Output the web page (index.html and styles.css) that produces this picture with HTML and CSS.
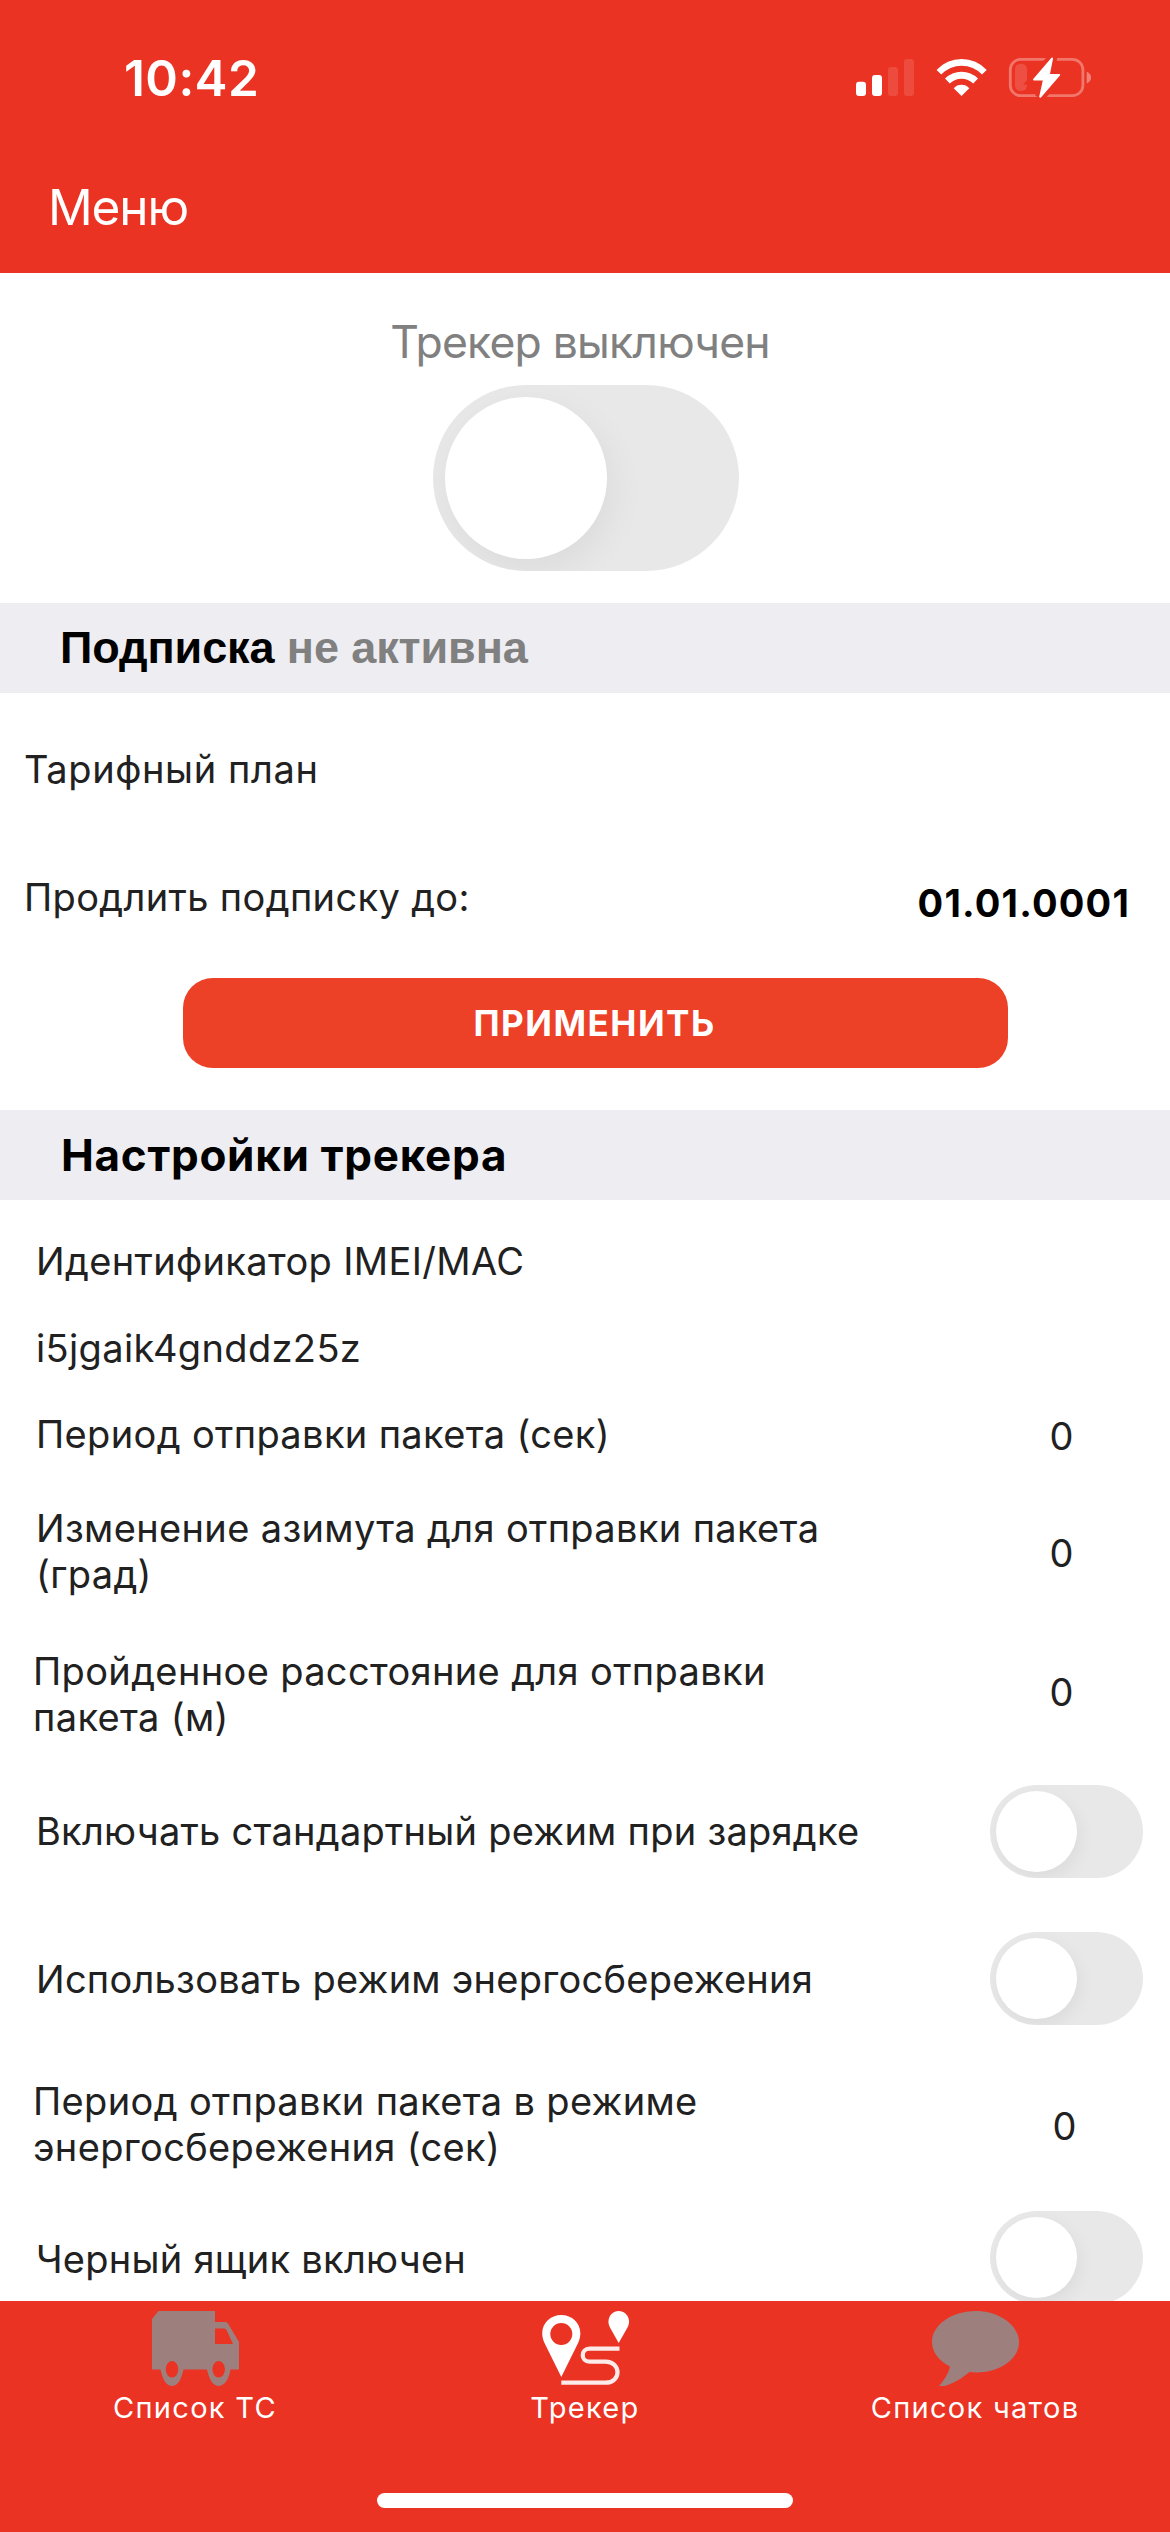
FILE: index.html
```html
<!DOCTYPE html>
<html lang="ru">
<head>
<meta charset="utf-8">
<title>Трекер</title>
<link rel="stylesheet" href="styles.css">
</head>
<body>
<div class="screen">
  <header class="header">
    <div class="status">
      <span class="clock">10:42</span>
      <svg class="status-icons" viewBox="0 0 244 44" fill="#fff">
        <rect x="4" y="25.7" width="10" height="14.3" rx="3"/>
        <rect x="20" y="19" width="10" height="21" rx="3"/>
        <rect x="36" y="11" width="10" height="29" rx="3" opacity=".12"/>
        <rect x="52" y="3" width="10" height="37" rx="3" opacity=".12"/>
        <path d="M84.6 14A34 34 0 0 1 134.7 14L130 18.4A28 28 0 0 0 89.3 18.4Z"/>
        <path d="M93 22.6A23.4 23.4 0 0 1 126 22.6L121.2 27.6A16.6 16.6 0 0 0 97.8 27.6Z"/>
        <path d="M101.7 32.2A10.6 10.6 0 0 1 117.3 32.2L109.5 40Z"/>
        <rect x="158.3" y="3.3" width="72.6" height="36.4" rx="10.5" fill="none" stroke="#fff" stroke-width="2.8" opacity=".33"/>
        <path d="M234.7 15.8C240.6 18 240.6 25.4 234.7 27.4Z" opacity=".38"/>
        <rect x="163" y="7.7" width="12" height="27.3" rx="5.5" opacity=".14"/>
        <path class="bolt-gap" d="M200 2.6L182 23.6H192L188.2 40.8L207.2 18.9H196.8Z"/>
        <path class="bolt" d="M200 2.6L182 23.6H192L188.2 40.8L207.2 18.9H196.8Z"/>
      </svg>
    </div>
    <h1 class="title">Меню</h1>
  </header>

  <main class="content">
    <section class="tracker">
      <p class="tracker-state">Трекер выключен</p>
      <div class="toggle toggle-large"><span class="knob"></span></div>
    </section>

    <h2 class="band band-subscription">Подписка <span class="muted">не активна</span></h2>
    <section class="subscription">
      <p class="label label-plan">Тарифный план</p>
      <div class="extend">
        <p class="label">Продлить подписку до:</p>
        <p class="date">01.01.0001</p>
      </div>
      <button class="apply">ПРИМЕНИТЬ</button>
    </section>

    <h2 class="band band-settings">Настройки трекера</h2>
    <section class="settings">
      <div class="row row-id"><p class="label">Идентификатор IMEI/MAC</p></div>
      <div class="row row-value"><p class="label">i5jgaik4gnddz25z</p></div>
      <div class="row row-period"><p class="label">Период отправки пакета (сек)</p><p class="value">0</p></div>
      <div class="row row-azimuth"><p class="label">Изменение азимута для отправки пакета (град)</p><p class="value">0</p></div>
      <div class="row row-distance"><p class="label">Пройденное расстояние для отправки пакета (м)</p><p class="value">0</p></div>
      <div class="row row-charging"><p class="label">Включать стандартный режим при зарядке</p><div class="toggle"><span class="knob"></span></div></div>
      <div class="row row-saving"><p class="label">Использовать режим энергосбережения</p><div class="toggle"><span class="knob"></span></div></div>
      <div class="row row-saving-period"><p class="label">Период отправки пакета в режиме энергосбережения (сек)</p><p class="value">0</p></div>
      <div class="row row-blackbox"><p class="label">Черный ящик включен</p><div class="toggle"><span class="knob"></span></div></div>
    </section>
  </main>

  <footer class="footer">
    <nav class="tabs">
      <a class="tab">
        <svg class="tab-icon" viewBox="0 0 87 75" fill="#9d7f7e">
          <path fill-rule="evenodd" d="M0 8L6.5 0H63V11H73.5Q75 11 76 12.5L87 31V58.5H78.5C77.5 65 74 75 66.7 75S56.5 65 55 58.5H31.5C30 65 27.3 75 20 75S10 65 8.5 58.5H0ZM63 17.5V33H81L74.5 19Q73.8 17.5 72 17.5ZM13.7 58.3a6.3 8.3 0 1 0 12.6 0a6.3 8.3 0 1 0-12.6 0ZM60.4 58.3a6.3 8.3 0 1 0 12.6 0a6.3 8.3 0 1 0-12.6 0Z"/>
        </svg>
        <span class="tab-label">Список ТС</span>
      </a>
      <a class="tab">
        <svg class="tab-icon" viewBox="0 0 87 75" fill="#fff">
          <path fill-rule="evenodd" d="M19.3 66L2.5 32C-4.5 17 5.5 4 19.3 4S43 17 36.1 32ZM8.3 23a11 11 0 1 0 22 0a11 11 0 1 0-22 0Z"/>
          <path d="M76.7 32L68 16.5C63.5 8 69.5 0 76.7 0S90 8 85.5 16.5Z"/>
          <path d="M77.5 37.7H47.5C38.5 37.7 38.5 50.7 47.5 50.7H63.5C79.5 50.7 79.5 71.7 63.5 71.7H19.3" fill="none" stroke="#fff" stroke-width="4.2" opacity=".9"/>
        </svg>
        <span class="tab-label">Трекер</span>
      </a>
      <a class="tab">
        <svg class="tab-icon" viewBox="0 0 87 75" fill="#9d7f7e">
          <path d="M43.5 0C67 0 87 14 87 31C87 50 64 64 37.500 61C30 67.500 21 72.500 12.500 75H7C12.500 69 16.500 62 18 55.500C7 50 0 41 0 31C0 14 20 0 43.500 0Z"/>
        </svg>
        <span class="tab-label">Список чатов</span>
      </a>
    </nav>
    <div class="home-indicator"></div>
  </footer>
</div>
</body>
</html>
```
FILE: styles.css
```css
* { box-sizing: border-box; margin: 0; padding: 0; }

body {
  background: #fff;
  font-family: Inter, "Liberation Sans", sans-serif;
}

.screen {
  width: 1170px;
  height: 2532px;
  display: flex;
  flex-direction: column;
  overflow: hidden;
}

/* Header */
.header {
  flex: none;
  height: 273px;
  padding-top: 48px;
  background: #eb3323;
  color: #fff;
  display: flex;
  flex-direction: column;
  gap: 69px;
}

.status {
  height: 60px;
  padding: 0 74px 0 124px;
  display: flex;
  justify-content: space-between;
  align-items: center;
}

.clock {
  font-size: 49.5px;
  font-weight: 600;
  line-height: 60px;
  letter-spacing: 0.4px;
}

.status-icons { width: 244px; height: 44px; }
.bolt-gap { fill: #eb3323; stroke: #eb3323; stroke-width: 10; }
.bolt { fill: #fff; stroke: #fff; stroke-width: 2; stroke-linejoin: round; }

.title {
  padding-left: 48px;
  font-size: 49.5px;
  font-weight: 400;
  line-height: 60px;
  letter-spacing: -1.1px;
}

.content { flex: 1; min-height: 0; overflow: hidden; }

/* Main switch */
.tracker {
  height: 330px;
  padding-top: 42px;
  display: flex;
  flex-direction: column;
  align-items: center;
  gap: 16px;
}

.tracker-state {
  padding-right: 10px;
  color: #808080;
  font-size: 44.5px;
  line-height: 54px;
  letter-spacing: -0.8px;
}

.toggle {
  flex: none;
  width: 153px;
  height: 93px;
  padding: 6px;
  border-radius: 47px;
  background: #e8e8e9;
  overflow: hidden;
}

.knob {
  display: block;
  width: 81px;
  height: 81px;
  border-radius: 50%;
  background: #fff;
  box-shadow: 3px 6px 18px rgba(0, 0, 0, 0.055);
}

.toggle-large {
  width: 306px;
  height: 186px;
  padding: 12px;
  border-radius: 93px;
  margin-left: 2px;
}

.toggle-large .knob {
  width: 162px;
  height: 162px;
  box-shadow: 6px 12px 36px rgba(0, 0, 0, 0.055);
}

/* Section bands */
.band {
  height: 90px;
  line-height: 90px;
  background: #eeedf2;
  color: #000;
  font-weight: 700;
}

.band-subscription {
  padding-left: 60px;
  font-family: "Liberation Sans", Arial, sans-serif;
  font-size: 45px;
  letter-spacing: -0.1px;
}

.muted { color: #808080; }

.band-settings {
  padding-left: 61px;
  font-size: 44px;
  letter-spacing: 0.72px;
}

.label {
  color: #212121;
  font-size: 38px;
  line-height: 46px;
  letter-spacing: 0.35px;
}

/* Subscription */
.subscription {
  height: 417px;
  padding: 53px 40px 0 24px;
}

.label-plan { letter-spacing: 0.6px; }

.extend {
  margin-top: 82px;
  display: flex;
  justify-content: space-between;
}

.date {
  margin: 6px 0 -6px;
  font-size: 38px;
  font-weight: 700;
  line-height: 46px;
  letter-spacing: 1.2px;
}

.apply {
  display: block;
  width: 825px;
  height: 90px;
  margin: 58px 0 0 159px;
  padding-right: 2px;
  border: 0;
  border-radius: 30px;
  background: #ec4027;
  color: #fff;
  font: 650 35px/90px Inter, sans-serif;
  letter-spacing: 1.5px;
}

/* Settings */
.settings { padding-top: 18px; }

.row {
  padding: 0 27px 0 36px;
  display: flex;
  justify-content: space-between;
  align-items: center;
}

.row .label { width: 840px; }

.value {
  width: 163px;
  color: #212121;
  font-size: 38px;
  line-height: 46px;
  text-align: center;
}

.row-id { height: 86px; }
.row-value { height: 88px; }
.row-period { height: 84px; }
.row-azimuth { height: 150px; }
.row-distance { height: 136px; padding-left: 33px; }
.row-distance .value { margin-bottom: 4px; }
.row-charging { height: 139px; }
.row-charging .label { margin-bottom: 2px; }
.row-saving { height: 155px; }
.row-charging .label, .row-saving .label, .row-blackbox .label { letter-spacing: 0.26px; }
.row-saving-period { height: 136px; padding: 0 24px 0 33px; }
.row-blackbox { height: 131px; }
.row-blackbox .label { margin-top: 3px; }
.row-period .value, .row-azimuth .value, .row-saving-period .value { margin-top: 3px; }

/* Bottom tabs */
.footer {
  flex: none;
  height: 231px;
  padding: 10px 0 24px;
  background: #eb3323;
  display: flex;
  flex-direction: column;
  justify-content: space-between;
  align-items: center;
}

.tabs {
  width: 100%;
  display: grid;
  grid-template-columns: repeat(3, 1fr);
}

.tab {
  display: flex;
  flex-direction: column;
  align-items: center;
  gap: 4px;
  color: #fff;
}

.tab-icon { width: 87px; height: 75px; }

.tab-label {
  font-size: 29px;
  line-height: 36px;
  letter-spacing: 1.3px;
}

.home-indicator {
  width: 416px;
  height: 15px;
  border-radius: 8px;
  background: #fff;
}
```
